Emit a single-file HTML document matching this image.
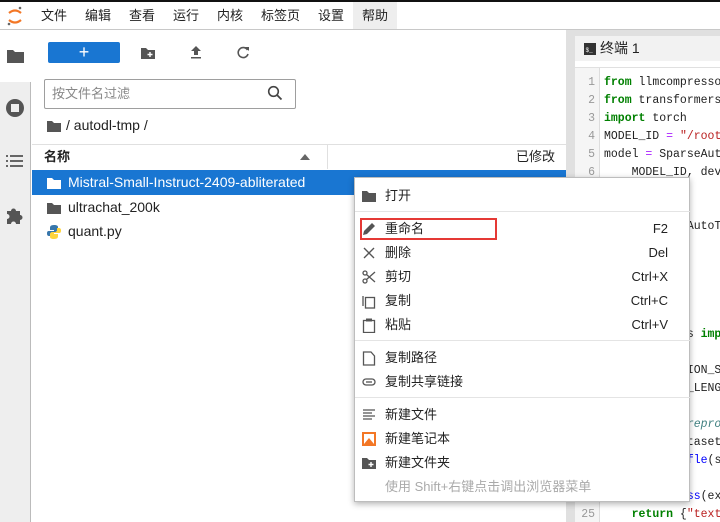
<!DOCTYPE html>
<html style="overflow:hidden"><head><meta charset="utf-8"><style>
*{margin:0;padding:0;box-sizing:border-box}
body{width:720px;height:522px;overflow:hidden;background:#fff;font-family:"Liberation Sans","Noto Sans CJK SC",sans-serif;position:relative;color:#222}
.abs{position:absolute}
.mb{top:2px;left:0;width:720px;height:28px;border-bottom:1px solid #c8c8c8;background:#fff}
.mb span{position:absolute;top:6px;font-size:13px;line-height:16px;color:#222}
.code{font-family:"Liberation Mono",monospace;font-size:11.5px;white-space:pre;line-height:18px}
.mi{position:absolute;left:0;width:335px;height:24px;font-size:13px;line-height:16px}
.mi .t{position:absolute;left:30px;top:4px}
.mi .k{position:absolute;right:22px;top:4px}
.mi svg{position:absolute;left:7px;top:5px}
.sep{position:absolute;left:0;width:335px;height:1px;background:#e4e4e4}
</style></head><body>
<div class="abs" style="top:0;left:0;width:720px;height:2px;background:#111"></div>
<div class="abs mb">
<svg class="abs" style="left:6px;top:3px" width="18" height="22" viewBox="0 0 18 22"><path d="M3 8 Q9 3 15 8" stroke="#f37726" stroke-width="2.2" fill="none"/><path d="M3 15 Q9 20 15 15" stroke="#f37726" stroke-width="2.2" fill="none"/><circle cx="14" cy="3" r="1.3" fill="#666"/><circle cx="3" cy="19" r="1.3" fill="#666"/></svg>
<span style="left:41px">文件</span><span style="left:85px">编辑</span><span style="left:129px">查看</span><span style="left:173px">运行</span><span style="left:217px">内核</span><span style="left:261px">标签页</span><span style="left:318px">设置</span>
<div class="abs" style="left:353px;top:0;width:44px;height:27px;background:#eee"></div><span style="left:362px">帮助</span>
</div>
<div class="abs" style="left:0;top:82px;width:31px;height:440px;background:#eee;border-right:1px solid #bbb"></div>
<svg class="abs" style="left:7px;top:48px" width="17" height="15" viewBox="0 0 17 15"><path d="M0 2h6l2 2h9v11H0z" fill="#555"/></svg>
<svg class="abs" style="left:5px;top:98px" width="20" height="20"><circle cx="10" cy="10" r="9" fill="#555"/><rect x="6" y="6" width="8" height="8" fill="#eee"/></svg>
<svg class="abs" style="left:6px;top:155px" width="18" height="13"><g fill="#666"><rect x="0" y="0" width="2" height="2"/><rect x="0" y="5" width="2" height="2"/><rect x="0" y="10" width="2" height="2"/><rect x="4" y="0" width="13" height="2"/><rect x="4" y="5" width="13" height="2"/><rect x="4" y="10" width="13" height="2"/></g></svg>
<svg class="abs" style="left:6px;top:206px" width="18" height="18" viewBox="0 0 18 18"><path d="M1 5h4a2.5 2.5 0 1 1 5 0h4v4a2.5 2.5 0 1 1 0 5v4H10a2.5 2.5 0 1 0-5 0H1v-5a2.5 2.5 0 1 0 0-5z" fill="#555"/></svg>
<div class="abs" style="left:48px;top:42px;width:72px;height:21px;background:#1976d2;border-radius:2px;color:#fff;text-align:center;font-size:18px;line-height:20px">+</div>
<svg class="abs" style="left:141px;top:47px" width="14" height="12" viewBox="0 0 14 12"><path d="M0 1h5l2 2h7v9H0z" fill="#555"/><path d="M9 5v5M6.5 7.5h5" stroke="#fff" stroke-width="1.4"/></svg>
<svg class="abs" style="left:190px;top:45px" width="12" height="14"><path d="M6 1L1 6h3v4h4V6h3z M1 12h10v1.5H1z" fill="#555"/></svg>
<svg class="abs" style="left:237px;top:46px" width="13" height="13" viewBox="0 0 13 13"><path d="M10.5 4A5 5 0 1 0 11 8" stroke="#555" stroke-width="1.6" fill="none"/><path d="M8 1h4v4z" fill="#555"/></svg>
<div class="abs" style="left:44px;top:79px;width:252px;height:30px;border:1px solid #9e9e9e;border-radius:2px"></div>
<div class="abs" style="left:52px;top:86px;font-size:13px;line-height:16px;color:#888">按文件名过滤</div>
<svg class="abs" style="left:267px;top:85px" width="16" height="16"><circle cx="6.5" cy="6.5" r="4.8" stroke="#444" stroke-width="1.6" fill="none"/><path d="M10 10l4.5 4.5" stroke="#444" stroke-width="1.8"/></svg>
<svg class="abs" style="left:47px;top:120px" width="14" height="12" viewBox="0 0 14 12"><path d="M0 1h5l2 2h7v9H0z" fill="#555"/></svg>
<div class="abs" style="left:66px;top:117px;font-size:14px;color:#222">/ autodl-tmp /</div>
<div class="abs" style="left:32px;top:144px;width:534px;height:1px;background:#e0e0e0"></div>
<div class="abs" style="left:327px;top:145px;width:1px;height:24px;background:#e0e0e0"></div>
<div class="abs" style="left:44px;top:149px;font-size:13px;line-height:16px;font-weight:bold">名称</div>
<svg class="abs" style="left:300px;top:154px" width="10" height="6"><path d="M0 6L5 0L10 6z" fill="#666"/></svg>
<div class="abs" style="left:516px;top:149px;font-size:13px;line-height:16px">已修改</div>
<div class="abs" style="left:32px;top:170px;width:534px;height:25px;background:#1976d2"></div>
<svg class="abs" style="left:47px;top:177px" width="14" height="12" viewBox="0 0 14 12"><path d="M0 1h5l2 2h7v9H0z" fill="#fff"/></svg>
<div class="abs" style="left:68px;top:174px;font-size:14px;color:#fff">Mistral-Small-Instruct-2409-abliterated</div>
<svg class="abs" style="left:47px;top:202px" width="14" height="12" viewBox="0 0 14 12"><path d="M0 1h5l2 2h7v9H0z" fill="#555"/></svg>
<div class="abs" style="left:68px;top:199px;font-size:14px">ultrachat_200k</div>
<svg class="abs" style="left:47px;top:225px" width="14" height="14" viewBox="0 0 14 14"><path d="M7 0C3 0 3 2 3 3v2h4v1H1.5C0 6 0 8 0 8.5 0 11 1.5 11 2.5 11H4V9c0-1 1-2 2-2h3c1 0 2-1 2-2V2c0-1-1-2-4-2z" fill="#3776ab"/><path d="M7 14c4 0 4-2 4-3V9H7V8h5.5C14 8 14 6 14 5.5 14 3 12.5 3 11.5 3H10v2c0 1-1 2-2 2H5c-1 0-2 1-2 2v3c0 1 1 2 4 2z" fill="#ffd43b"/></svg>
<div class="abs" style="left:68px;top:223px;font-size:14px">quant.py</div>
<div class="abs" style="left:566px;top:30px;width:154px;height:492px;background:#e0e0e0"></div>
<div class="abs" style="left:575px;top:36px;width:145px;height:25px;background:#f2f2f2"></div>
<svg class="abs" style="left:584px;top:43px" width="12" height="12"><rect width="12" height="12" fill="#333"/><text x="1.5" y="9" font-size="6" fill="#fff" font-family="Liberation Mono">$_</text></svg>
<div class="abs" style="left:600px;top:40px;font-size:14px;line-height:17px">终端 1</div>
<div class="abs" style="left:575px;top:61px;width:145px;height:6px;background:#fff"></div>
<div class="abs" style="left:575px;top:68px;width:25px;height:454px;background:#f5f5f5;border-right:1px solid #ddd"></div>
<div class="abs" style="left:600px;top:68px;width:120px;height:454px;background:#fff"></div>
<div class="abs code" style="left:575px;top:74px;width:20px;text-align:right;color:#999">1
2
3
4
5
6
7
8
9
10
11
12
13
14
15
16
17
18
19
20
21
22
23
24
25</div>
<div class="abs code" style="left:604px;top:74px;color:#222"><span style="color:#008000;font-weight:bold">from</span> llmcompressor
<span style="color:#008000;font-weight:bold">from</span> transformers
<span style="color:#008000;font-weight:bold">import</span> torch
MODEL_ID <span style="color:#a2f">=</span> <span style="color:#ba2121">"/root</span>
model <span style="color:#a2f">=</span> SparseAuto
    MODEL_ID, dev


            AutoT





            s <span style="color:#008000;font-weight:bold">imp</span>

            ION_S
            _LENG

            <span style="color:#408080;font-style:italic">repro</span>
            taset
            <span style="color:#00f">fle</span>(s

<span style="color:#008000;font-weight:bold">def</span> <span style="color:#00f">preprocess</span>(ex
    <span style="color:#008000;font-weight:bold">return</span> {<span style="color:#ba2121">"text</span></div>
<div class="abs" style="left:354px;top:177px;width:336px;height:325px;background:#fff;border:1px solid #bdbdbd;box-shadow:0 2px 6px rgba(0,0,0,.3)">
<div class="mi" style="top:6px"><svg width="14" height="12" viewBox="0 0 14 12" style="top:6px"><path d="M0 1h5l2 2h7v9H0z" fill="#555"/></svg><span class="t">打开</span></div>
<div class="sep" style="top:33px"></div>
<div class="mi" style="top:39px"><svg width="14" height="14"><path d="M1 13l1-4 8-8 3 3-8 8z" fill="#555"/></svg><span class="t">重命名</span><span class="k">F2</span></div>
<div class="abs" style="left:5px;top:40px;width:137px;height:22px;border:2px solid #e53935"></div>
<div class="mi" style="top:63px"><svg width="14" height="14"><path d="M2 2l10 10M12 2L2 12" stroke="#555" stroke-width="1.4"/></svg><span class="t">删除</span><span class="k">Del</span></div>
<div class="mi" style="top:87px"><svg width="14" height="14"><circle cx="3" cy="3" r="2" stroke="#555" fill="none" stroke-width="1.3"/><circle cx="3" cy="11" r="2" stroke="#555" fill="none" stroke-width="1.3"/><path d="M4.5 4.5L13 12M4.5 9.5L13 2" stroke="#555" stroke-width="1.3"/></svg><span class="t">剪切</span><span class="k">Ctrl+X</span></div>
<div class="mi" style="top:111px"><svg width="14" height="15"><path d="M1 2v10" stroke="#555" stroke-width="1.3"/><rect x="3.5" y="3.5" width="9" height="10.5" fill="none" stroke="#555" stroke-width="1.3"/></svg><span class="t">复制</span><span class="k">Ctrl+C</span></div>
<div class="mi" style="top:135px"><svg width="14" height="15"><rect x="1.5" y="2.5" width="11" height="12" fill="none" stroke="#555" stroke-width="1.3"/><rect x="4" y="0.5" width="6" height="3" fill="#555"/></svg><span class="t">粘贴</span><span class="k">Ctrl+V</span></div>
<div class="sep" style="top:162px"></div>
<div class="mi" style="top:168px"><svg width="14" height="15"><path d="M1.5 1v13h11V5L9 1z" fill="none" stroke="#555" stroke-width="1.3"/></svg><span class="t">复制路径</span></div>
<div class="mi" style="top:192px"><svg width="14" height="14"><rect x="1" y="4" width="12" height="6" rx="3" fill="none" stroke="#555" stroke-width="1.3"/><path d="M4 7h6" stroke="#555" stroke-width="1.3"/></svg><span class="t">复制共享链接</span></div>
<div class="sep" style="top:219px"></div>
<div class="mi" style="top:225px"><svg width="14" height="14"><path d="M1 2h12M1 5h9M1 8h12M1 11h9" stroke="#555" stroke-width="1.3"/></svg><span class="t">新建文件</span></div>
<div class="mi" style="top:249px"><svg width="14" height="14"><rect width="14" height="14" fill="#f37726"/><rect x="2" y="2" width="10" height="10" fill="#fff"/><path d="M2 12L7 6l5 6z" fill="#f37726"/></svg><span class="t">新建笔记本</span></div>
<div class="mi" style="top:273px"><svg width="14" height="12" viewBox="0 0 14 12" style="top:6px"><path d="M0 1h5l2 2h7v9H0z" fill="#555"/><path d="M9 5v5M6.5 7.5h5" stroke="#fff" stroke-width="1.4"/></svg><span class="t">新建文件夹</span></div>
<div class="mi" style="top:297px"><span class="t" style="color:#aaa">使用 Shift+右键点击调出浏览器菜单</span></div>
</div>
</body></html>
